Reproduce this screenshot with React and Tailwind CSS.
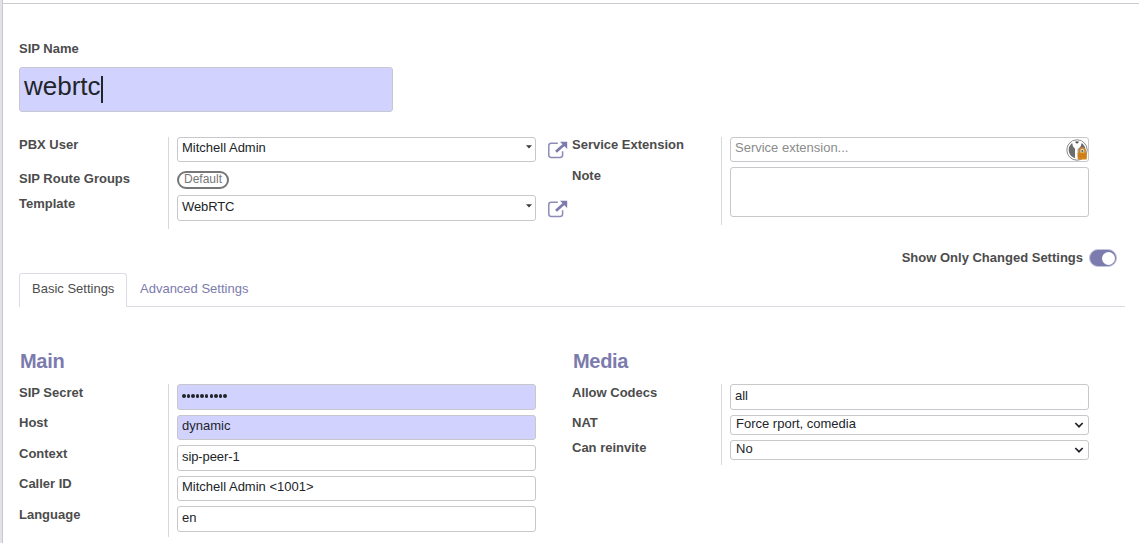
const box = 'border border-[#c8c8cc] rounded-[3px] w-[359px] shrink-0 pl-1 text-[13px] leading-4 text-[#212529] whitespace-pre';

function Row({ label, labelClass = 'pt-0', className = '', children }) {
  return (
    <div className={`flex items-start ${className}`}>
      <div className={`w-[149px] shrink-0 text-[13px] leading-4 font-bold text-[#4c4c4c] ${labelClass}`}>
        <span>{label}</span>
      </div>
      <div className="flex items-start pl-[9px]">{children}</div>
    </div>
  );
}

function Group({ className = '', children }) {
  return (
    <div className={`flex flex-col bg-[linear-gradient(#d8d8dc,#d8d8dc)] bg-[length:1px_100%] bg-[position:149px_0] bg-no-repeat ${className}`}>
      {children}
    </div>
  );
}

function Caret() {
  return (
    <svg className="ml-auto mr-[3px] mt-[5px]" width="6" height="4" viewBox="0 0 6 4">
      <path d="M0 0.3h6L3 3.5z" fill="#3c3c3c" />
    </svg>
  );
}

function Chevron() {
  return (
    <svg className="ml-auto mr-[4px] mt-[5px]" width="10" height="8" viewBox="0 0 10 8" fill="none">
      <path d="M1.3 2L5 5.7l3.7-3.7" stroke="#212529" strokeWidth="1.7" />
    </svg>
  );
}

function ExternalLink() {
  return (
    <svg className="ml-3 mt-1" width="20" height="18" viewBox="0 0 20 18" fill="none">
      <path d="M9.8 2.2H3.2Q.8 2.2.8 4.6v9.4q0 2.4 2.4 2.4h9q2.4 0 2.4-2.4v-3.7" stroke="#8d8cb8" strokeWidth="1.5" />
      <path d="M8 10.8L16.2 3.4" stroke="#7c7bad" strokeWidth="2.7" />
      <path d="M12 .8h7.2v7.1z" fill="#7c7bad" />
    </svg>
  );
}

function KeyLock() {
  return (
    <svg className="ml-auto mt-px" width="22" height="22" viewBox="0 0 22 22">
      <circle cx="11" cy="11" r="10.2" fill="#fff" stroke="#8a8a8a" strokeWidth="1" />
      <circle cx="11" cy="11" r="8.4" fill="#6c6c6c" />
      <path d="M5.8 2.4L7 7.4l2 2.4v9l1.8 1.4 1.6-1.6V9.8l2.2-2.2 1.6-5.2L13 2l-2 2L9 2z" fill="#fff" />
      <path d="M8.8 2.8h4.4L11 4.8z" fill="#444" />
      <path d="M11.8 9.6v9" stroke="#999" strokeWidth=".6" />
      <path d="M13.5 14v-2.2a2.8 2.8 0 015.6 0V14" fill="#e6d2b0" stroke="#c9862c" strokeWidth="1.6" />
      <rect x="11.8" y="13.6" width="9" height="6.8" rx=".6" fill="#d4851c" />
      <path d="M12 15.6h8.6M12 17.6h8.6" stroke="#bd7315" strokeWidth=".6" />
      <circle cx="16.3" cy="12" r="1" fill="#666" />
    </svg>
  );
}

export default function App() {
  return (
    <div className="flex h-[543px] w-[1139px] overflow-hidden bg-white font-['Liberation_Sans',Arial,sans-serif]">
      <div className="w-[3px] shrink-0 border-r border-[#c8c8d3] bg-[#e3e3e5]" />
      <div className="flex flex-1 flex-col">
        <div className="h-1 shrink-0 border-b border-[#cbcbd2]" />
        <div className="flex flex-col pl-4 pr-[14px]">
          <div className="mt-[37px] text-[13px] leading-4 font-bold text-[#4c4c4c]"><span>SIP Name</span></div>
          <div className="mt-[10px] flex h-[45px] w-[374px] items-start rounded-[3px] border border-[#c8c8d3] bg-[#d2d2ff] pl-1 text-[26px] leading-[30px] text-[#212529]">
            <span className="mt-[3px]">webrtc</span>
            <span className="mt-2 h-[27px] w-[2px] bg-[#212529]" />
          </div>

          <div className="mt-[25px] flex h-[112px] items-start">
            <Group className="h-[92px] w-[553px]">
              <Row label="PBX User" className="h-[34px]">
                <div className={`${box} flex h-[25px] pt-[2px]`}><span>Mitchell Admin</span><Caret /></div>
                <ExternalLink />
              </Row>
              <Row label="SIP Route Groups" className="h-6">
                <div className="flex h-[18px] w-[52px] justify-center rounded-full border-2 border-[#777] text-xs leading-[13px] text-[#777]"><span>Default</span></div>
              </Row>
              <Row label="Template" labelClass="pt-px">
                <div className={`${box} flex h-[26px] pt-[3px]`}><span className="tracking-[-0.1px]">WebRTC</span><Caret /></div>
                <div className="pt-px"><ExternalLink /></div>
              </Row>
            </Group>
            <Group className="h-[88px]">
              <Row label="Service Extension" className="h-[30px]">
                <div className={`${box} flex h-[25px]`}><span className="pt-[2px] text-[#8b8b8b]">Service extension...</span><KeyLock /></div>
              </Row>
              <Row label="Note" labelClass="pt-px">
                <div className={`${box} h-[50px]`} />
              </Row>
            </Group>
          </div>

          <div className="flex h-6 items-start justify-end pr-[8px]">
            <span className="mt-px text-[13px] leading-4 font-bold text-[#4c4c4c]">Show Only Changed Settings</span>
            <div className="ml-[6px] flex h-[18px] w-7 items-center justify-end rounded-full border border-[#c5c4dd] bg-[#7c7bad] pr-px">
              <div className="size-[13px] rounded-full bg-white" />
            </div>
          </div>

          <div className="flex h-[34px] text-[13px] leading-4">
            <div className="w-[108px] shrink-0 rounded-t-[3px] border border-b-0 border-[#dcdce6] pl-3 pt-[7px] text-[#4c4c4c]"><span>Basic Settings</span></div>
            <div className="flex-1 border-b border-[#dcdce6] pl-[13px] pt-2 text-[#7c7bad]"><span>Advanced Settings</span></div>
          </div>

          <div className="mt-[42px] flex h-[35px] text-xl leading-6 font-bold tracking-[-0.3px] text-[#7c7bad]">
            <div className="w-[553px] pl-px"><span>Main</span></div>
            <div className="pl-px"><span>Media</span></div>
          </div>
          <div className="flex items-start">
            <Group className="h-[153px] w-[553px]">
              <Row label="SIP Secret" labelClass="pt-px" className="h-[31px]">
                <div className={`${box} flex h-[26px] items-center gap-[1.1px]`+' bg-[#d2d2ff]'}>
                  {Array.from({ length: 10 }, (_, i) => (
                    <span key={i} className="mb-[2px] size-[3.5px] rounded-full bg-[#212529]" />
                  ))}
                </div>
              </Row>
              <Row label="Host" className="h-[30px]">
                <div className={`${box} h-[25px] bg-[#d2d2ff] pt-[2px]`}><span>dynamic</span></div>
              </Row>
              <Row label="Context" labelClass="pt-px" className="h-[31px]">
                <div className={`${box} h-[26px] pt-[3px]`}><span className="tracking-[-0.1px]">sip-peer-1</span></div>
              </Row>
              <Row label="Caller ID" className="h-[30px]">
                <div className={`${box} h-[25px] pt-[2px]`}><span>{'Mitchell Admin <1001>'}</span></div>
              </Row>
              <Row label="Language" labelClass="pt-px">
                <div className={`${box} h-[26px] pt-[3px]`}><span>en</span></div>
              </Row>
            </Group>
            <Group className="h-[81px]">
              <Row label="Allow Codecs" labelClass="pt-px" className="h-[31px]">
                <div className={`${box} h-[26px] pt-[3px]`}><span>all</span></div>
              </Row>
              <Row label="NAT" className="h-[25px]">
                <div className={`${box} flex h-5`}><span className="pl-px">Force rport, comedia</span><Chevron /></div>
              </Row>
              <Row label="Can reinvite">
                <div className={`${box} flex h-5`}><span className="pl-px">No</span><Chevron /></div>
              </Row>
            </Group>
          </div>
        </div>
      </div>
    </div>
  );
}
